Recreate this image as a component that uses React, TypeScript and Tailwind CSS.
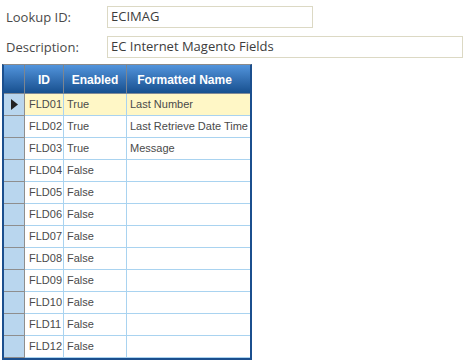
import React from 'react'

const rows = [
  { id: 'FLD01', enabled: 'True', name: 'Last Number' },
  { id: 'FLD02', enabled: 'True', name: 'Last Retrieve Date Time' },
  { id: 'FLD03', enabled: 'True', name: 'Message' },
  { id: 'FLD04', enabled: 'False', name: '' },
  { id: 'FLD05', enabled: 'False', name: '' },
  { id: 'FLD06', enabled: 'False', name: '' },
  { id: 'FLD07', enabled: 'False', name: '' },
  { id: 'FLD08', enabled: 'False', name: '' },
  { id: 'FLD09', enabled: 'False', name: '' },
  { id: 'FLD10', enabled: 'False', name: '' },
  { id: 'FLD11', enabled: 'False', name: '' },
  { id: 'FLD12', enabled: 'False', name: '' },
]

function Field({ label, value, width }: { label: string; value: string; width: string }) {
  return (
    <div className="flex items-center h-[22px]">
      <div className="w-[101px] pt-[2px] text-[13px] text-[#4a4a4a]">{label}</div>
      <div className={`${width} h-[22px] border border-[#dcd9c4] px-[3px] flex items-center text-[13px] text-[#3c3c3c]`}>
        {value}
      </div>
    </div>
  )
}

export default function App() {
  return (
    <div className="w-[464px] h-[360px] bg-white overflow-hidden font-['Open_Sans',sans-serif]">
      <div className="pt-[6px] pl-[6px] flex flex-col gap-[8px]">
        <Field label="Lookup ID:" value="ECIMAG" width="w-[206px]" />
        <Field label="Description:" value="EC Internet Magento Fields" width="w-[356px]" />
      </div>

      {/* grid */}
      <div className="ml-[2px] mt-[6px] w-[250px] border-x-2 border-b-2 border-[#1b4f8e] border-t border-t-[#8a8a8a] font-['Liberation_Sans',sans-serif] text-[11px]">
        <div className="flex h-[29px] bg-gradient-to-b from-[#5294dc] to-[#17508f] border-b border-[#7f8a96] text-white font-bold text-[12px]">
          <div className="w-[21px] border-r border-[#7c8590]" />
          <div className="w-[39px] border-r border-[#7c8590] flex items-center justify-center pt-[2px]">ID</div>
          <div className="w-[63px] border-r border-[#7c8590] flex items-center justify-center pt-[2px]">Enabled</div>
          <div className="flex-1 flex items-center justify-center pt-[2px] pr-[8px]">Formatted Name</div>
        </div>
        {rows.map((r, i) => (
          <div key={r.id} className={`flex h-[22px] text-[#4a4a4a] ${i === 0 ? 'bg-[#fff7c6]' : 'bg-white'}`}>
            <div className="w-[21px] bg-[#b9d6ee] border-r border-b border-[#8e8e8e] flex items-center justify-center">
              {i === 0 && (
                <svg width="7" height="11" viewBox="0 0 7 11">
                  <path d="M0 0 L7 5.5 L0 11 Z" fill="#222" />
                </svg>
              )}
            </div>
            <div className="w-[39px] border-r border-b border-[#a9d3f0] flex items-center pl-[4px]">{r.id}</div>
            <div className="w-[63px] border-r border-b border-[#a9d3f0] flex items-center pl-[3px]">{r.enabled}</div>
            <div className="flex-1 border-b border-[#a9d3f0] flex items-center pl-[3px] whitespace-nowrap overflow-hidden">{r.name}</div>
          </div>
        ))}
      </div>
    </div>
  )
}
